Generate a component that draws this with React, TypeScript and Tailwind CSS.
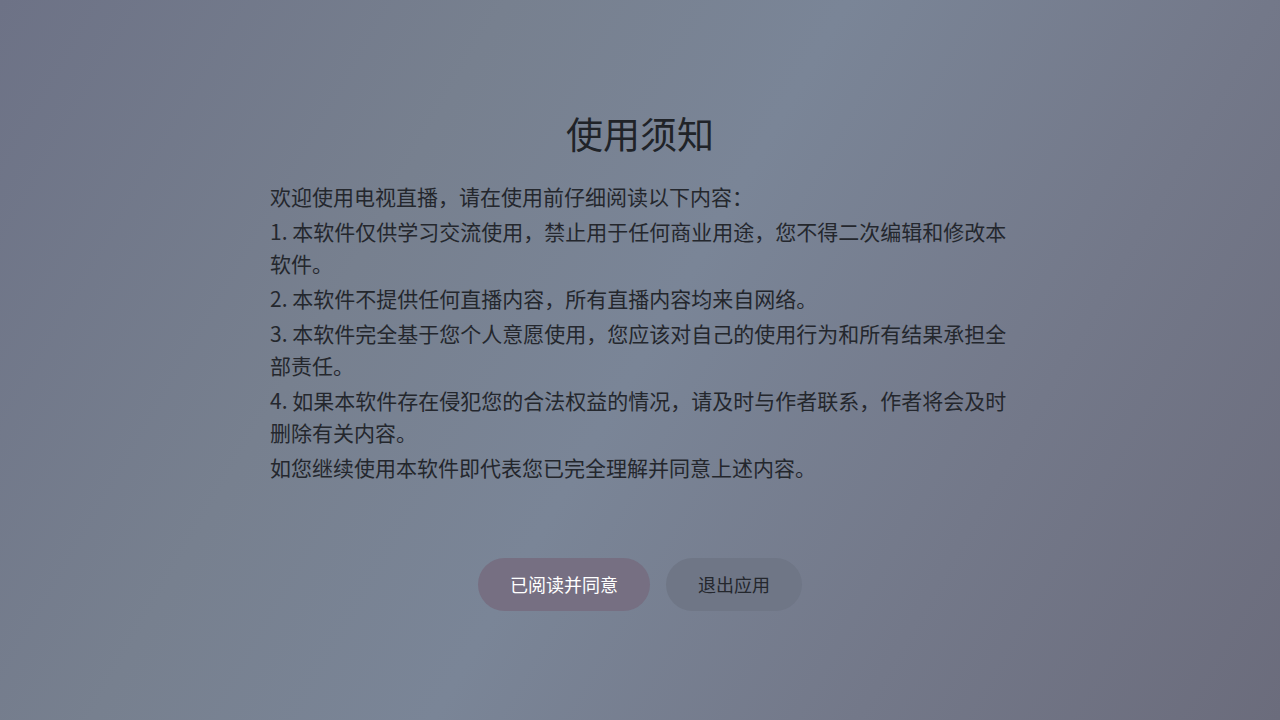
import React from "react";

const paras = [
  "欢迎使用电视直播，请在使用前仔细阅读以下内容：",
  "1. 本软件仅供学习交流使用，禁止用于任何商业用途，您不得二次编辑和修改本软件。",
  "2. 本软件不提供任何直播内容，所有直播内容均来自网络。",
  "3. 本软件完全基于您个人意愿使用，您应该对自己的使用行为和所有结果承担全部责任。",
  "4. 如果本软件存在侵犯您的合法权益的情况，请及时与作者联系，作者将会及时删除有关内容。",
  "如您继续使用本软件即代表您已完全理解并同意上述内容。",
];

export default function App() {
  return (
    <div
      className="w-[1280px] h-[720px] flex flex-col items-center bg-[linear-gradient(120deg,#6d7286_0%,#77808f_30%,#7a8597_50%,#737889_75%,#6b6c7c_100%)] text-[#24272d]"
      style={{ fontFamily: '"Noto Sans CJK SC", "Noto Sans", sans-serif' }}
    >
      <h1 className="mt-[108px] text-[37px] leading-[50px] font-normal text-[#202328]">使用须知</h1>
      <div className="mt-[22px] w-[740px] flex flex-col gap-[3px] text-[21px] leading-[32px]">
        {paras.map((p, i) => (
          <p key={i}>{p}</p>
        ))}
      </div>
      <div className="mt-[75px] flex gap-4">
        <button className="h-[53px] px-8 rounded-full bg-[#766f82] text-white text-[18px]">已阅读并同意</button>
        <button className="h-[53px] px-8 rounded-full bg-[#6f7686] text-[#24272d] text-[18px]">退出应用</button>
      </div>
    </div>
  );
}
